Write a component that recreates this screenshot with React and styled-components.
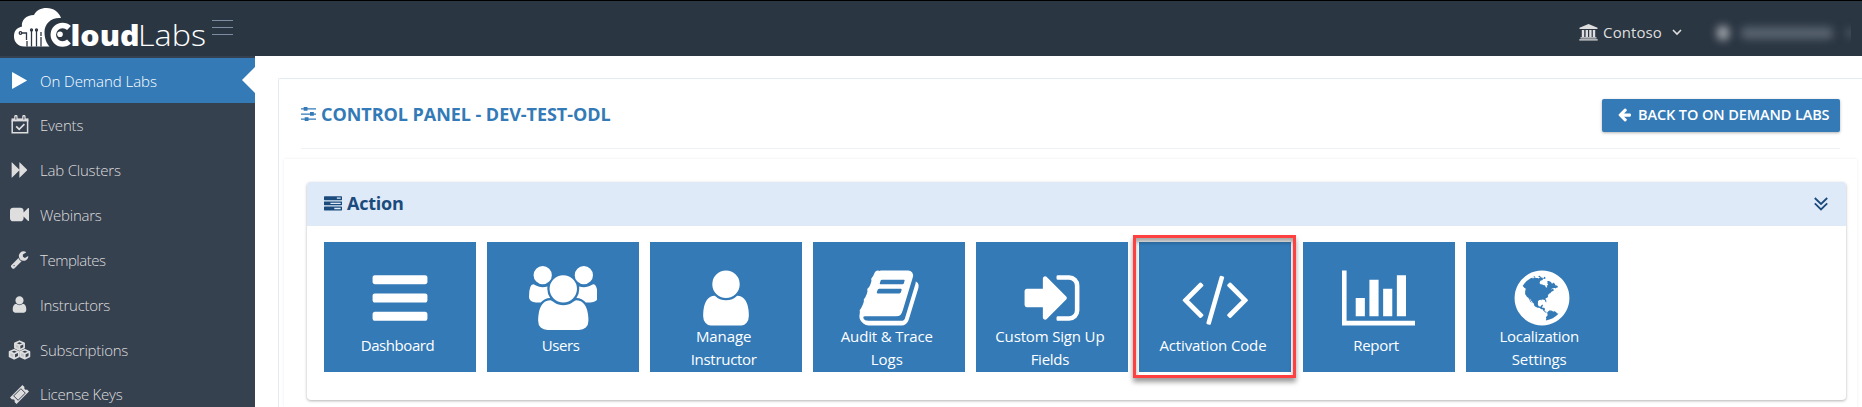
import React from 'react';
import styled, { createGlobalStyle } from 'styled-components';

const GlobalStyle = createGlobalStyle`
  * { box-sizing: border-box; }
  body {
    margin: 0;
    background: #fff;
    overflow: hidden;
    font-family: "Open Sans", "Noto Sans", sans-serif;
  }
`;

const PATHS = {
  bars: [1792, 'M1664 1344v128q0 26-19 45t-45 19h-1408q-26 0-45-19t-19-45v-128q0-26 19-45t45-19h1408q26 0 45 19t19 45zm0-512v128q0 26-19 45t-45 19h-1408q-26 0-45-19t-19-45v-128q0-26 19-45t45-19h1408q26 0 45 19t19 45zm0-512v128q0 26-19 45t-45 19h-1408q-26 0-45-19t-19-45v-128q0-26 19-45t45-19h1408q26 0 45 19t19 45z'],
  user: [1792, 'M1536 1399q0 109-62.5 187t-150.5 78h-854q-88 0-150.5-78t-62.5-187q0-85 8.5-160.5t31.5-152 58.5-131 94-89 134.5-34.5q131 128 313 128t313-128q76 0 134.5 34.5t94 89 58.5 131 31.5 152 8.5 160.5zm-256-887q0 159-112.5 271.5t-271.5 112.5-271.5-112.5-112.5-271.5 112.5-271.5 271.5-112.5 271.5 112.5 112.5 271.5z'],
  users: [1920, 'M593 896q-162 5-265 128h-134q-82 0-138-40.5t-56-118.5q0-353 124-353 6 0 43.5 21t97.5 42.5 119 21.5q67 0 133-23-5 37-5 66 0 139 81 256zm1071 637q0 120-73 189.5t-194 69.5h-874q-121 0-194-69.5t-73-189.5q0-53 3.5-103.5t14-109 26.5-108.5 43-97.5 62-81 85.5-53.5 111.5-20q10 0 43 21.5t73 48 107 48 135 21.5 135-21.5 107-48 73-48 43-21.5q61 0 111.5 20t85.5 53.5 62 81 43 97.5 26.5 108.5 14 109 3.5 103.5zm-1024-1277q0 106-75 181t-181 75-181-75-75-181 75-181 181-75 181 75 75 181zm704 384q0 159-112.5 271.5t-271.5 112.5-271.5-112.5-112.5-271.5 112.5-271.5 271.5-112.5 271.5 112.5 112.5 271.5zm576 225q0 78-56 118.5t-138 40.5h-134q-103-123-265-128 81-117 81-256 0-29-5-66 66 23 133 23 59 0 119-21.5t97.5-42.5 43.5-21q124 0 124 353zm-128-609q0 106-75 181t-181 75-181-75-75-181 75-181 181-75 181 75 75 181z'],
  code: [1920, 'M617 1399l-50 50q-10 10-23 10t-23-10l-466-466q-10-10-10-23t10-23l466-466q10-10 23-10t23 10l50 50q10 10 10 23t-10 23l-393 393 393 393q10 10 10 23t-10 23zm591-1067l-373 1291q-4 13-15.5 19.5t-23.5 2.5l-62-17q-13-4-19.5-15.5t-2.5-24.5l373-1291q4-13 15.5-19.5t23.5-2.5l62 17q13 4 19.5 15.5t2.5 24.5zm657 651l-466 466q-10 10-23 10t-23-10l-50-50q-10-10-10-23t10-23l393-393-393-393q-10-10-10-23t10-23l50-50q10-10 23-10t23 10l466 466q10 10 10 23t-10 23z'],
  chart: [2048, 'M640 896v512h-256v-512h256zm384-512v1024h-256v-1024h256zm1024 1152v128h-2048v-1536h128v1408h1920zm-640-896v768h-256v-768h256zm384-384v1152h-256v-1152h256z'],
  book: [1792, 'M1703 478q40 57 18 129l-275 906q-19 64-76.5 107.5t-122.5 43.5h-923q-77 0-148.5-53.5t-99.5-131.5q-24-67-2-127 0-4 3-27t4-37q1-8-3-21.5t-3-19.5q2-11 8-21t16.5-23.5 16.5-23.5q23-38 45-91.5t30-91.5q3-10 .5-30t-.5-28q3-11 17-28t17-23q21-36 42-92t25-90q1-9-2.5-32t.5-28q4-13 22-30.5t22-22.5q19-26 42.5-84.5t27.5-96.5q1-8-3-25.5t-2-26.5q2-8 9-18t18-23 17-21q8-12 16.5-30.5t15-35 16-36 19.5-32 26.5-23.5 36-11.5 47.5 5.5l-1 3q38-9 51-9h761q74 0 114 56t18 130l-274 906q-36 119-71.5 153.5t-128.5 34.5h-869q-27 0-38 15-11 16-1 43 24 70 144 70h923q29 0 56-15.5t35-41.5l300-987q7-22 5-57 38 15 59 43zm-1064 2q-4 13 2 22.5t20 9.5h608q13 0 25.5-9.5t16.5-22.5l21-64q4-13-2-22.5t-20-9.5h-608q-13 0-25.5 9.5t-16.5 22.5zm-83 256q-4 13 2 22.5t20 9.5h608q13 0 25.5-9.5t16.5-22.5l21-64q4-13-2-22.5t-20-9.5h-608q-13 0-25.5 9.5t-16.5 22.5z'],
  signIn: [1792, 'M1312 896q0 26-19 45l-544 544q-19 19-45 19t-45-19-19-45v-288h-448q-26 0-45-19t-19-45v-384q0-26 19-45t45-19h448v-288q0-26 19-45t45-19 45 19l544 544q19 19 19 45zm352-352v704q0 119-84.5 203.5t-203.5 84.5h-320q-13 0-22.5-9.5t-9.5-22.5q0-4-1-20t-.5-26.5 3-23.5 10-19.5 20.5-6.5h320q66 0 113-47t47-113v-704q0-66-47-113t-113-47h-312l-11.5-1-11.5-3-8-5.5-7-9-2-13.5q0-4-1-20t-.5-26.5 3-23.5 10-19.5 20.5-6.5h320q119 0 203.5 84.5t84.5 203.5z'],
  globe: [1792, 'M896 128q209 0 385.5 103t279.5 279.5 103 385.5-103 385.5-279.5 279.5-385.5 103-385.5-103-279.5-279.5-103-385.5 103-385.5 279.5-279.5 385.5-103zm274 521q-2 1-9.5 9.5t-13.5 9.5q2 0 4.5-5t5-11 3.5-7q6-7 22-15 14-6 52-12 34-8 51 11-2-2 9.5-13t14.5-12q3-2 15-4.5t15-7.5l2-22q-12 1-17.5-7t-6.5-21q0 2-6 8 0-7-4.5-8t-11.5 1-9 1q-10-3-15-7.5t-8-16.5-4-15q-2-5-9.5-10.5t-9.5-10.5q-1-2-2.5-5.5t-3-6.5-4-5.5-5.5-2.5-7 5-7.5 10-4.5 5q-3-2-6-1.5t-4.5 1-4.5 3-5 3.5q-3 2-8.5 3t-8.5 2q15-5-1-11-10-4-16-3 9-4 7.5-12t-8.5-14h5q-1-4-8.5-8.5t-17.5-8.5-13-6q-8-5-34-9.5t-33-.5q-5 6-4.5 10.5t4 14 3.5 12.5q1 6-5.5 13t-6.5 12q0 7 14 15.5t10 21.5q-3 8-16 16t-16 12q-5 8-1.5 18.5t10.5 16.5q2 2 1.5 4t-3.5 4.5-5.5 4-6.5 3.5l-3 2q-11 5-20.5-6t-13.5-26q-7-25-16-30-23-8-29 1-5-13-41-26-25-9-58-4 6-1 0-15-7-15-19-12 3-6 4-17.5t1-13.5q3-13 12-23 1-1 7-8.5t9.5-13.5.5-6q35 4 50-11 5-5 11.5-17t10.5-17q9-6 14-5.5t14.5 5.5 14.5 5q14 1 15.5-11t-7.5-20q12 1 3-17-4-7-8-9-12-4-27 5-8 4 2 8-1-1-9.5 10.5t-16.5 17.5-16-5q-1-1-5.5-13.5t-9.5-13.5q-8 0-16 15 3-8-11-15t-24-8q19-12-8-27-7-4-20.5-5t-19.5 4q-5 7-5.5 11.5t5 8 10.5 5.5 11.5 4 8.5 3q14 10 8 14-2 1-8.5 3.5t-11.5 4.5-6 4q-3 4 0 14t-2 14q-5-5-9-17.5t-7-16.5q7 9-25 6l-10-1q-4 0-16 2t-20.5 1-13.5-8q-4-8 0-20 1-4 4-2-4-3-11-9.5t-10-8.5q-46 15-94 41 6 1 12-1 5-2 13-6.5t10-5.5q34-14 42-7l5-5q14 16 20 25-7-4-30-1-20 6-22 12 7 12 5 18-4-3-11.5-10t-14.5-11-15-5q-16 0-22 1-146 80-235 222 7 7 12 8 4 1 5 9t2.5 11 11.5-3q9 8 3 19 1-1 44 27 19 17 21 21 3 11-10 18-1-2-9-9t-9-4q-3 5 .5 18.5t10.5 12.5q-7 0-9.5 16t-2.5 35.5-1 23.5l2 1q-3 12 5.5 34.5t21.5 19.5q-13 3 20 43 6 8 8 9 3 2 12 7.5t15 10 10 10.5q4 5 10 22.5t14 23.5q-2 6 9.5 20t10.5 23q-1 0-2.5 1t-2.5 1q3 7 15.5 14t15.5 13q1 3 2 10t3 11 8 2q2-20-24-62-15-25-17-29-3-5-5.5-15.5t-4.5-14.5q2 0 6 1.5t8.5 3.5 7.5 4 2 3q-3 7 2 17.5t12 18.5 17 19 12 13q6 6 14 19.5t0 13.5q9 0 20 10.5t17 19.5q5 8 8 26t5 24q2 7 8.5 13.5t12.5 9.5l16 8 13 7q5 2 18.5 10.5t21.5 11.5q10 4 16 4t14.5-2.5 13.5-3.5q15-2 29 15t21 21q36 19 55 11-2 1 .5 7.5t8 15.5 9 14.5 5.5 8.5q5 6 18 15t18 15q6-4 7-9-3 8 7 20t18 10q14-3 14-32-31 15-49-18 0-1-2.5-5.5t-4-8.5-2.5-8.5 0-7.5 5-3q9 0 10-3.5t-2-12.5-4-13q-1-8-11-20t-12-15q-5 9-16 8t-16-9q0 1-1.5 5.5t-1.5 6.5q-13 0-15-1 1-3 2.5-17.5t3.5-22.5q1-4 5.5-12t7.5-14.5 4-12.5-4.5-9.5-17.5-2.5q-19 1-26 20-1 3-3 10.5t-5 11.5-9 7q-7 3-24 2t-24-5q-13-8-22.5-29t-9.5-37q0-10 2.5-26.5t3-25-5.5-24.5q3-2 9-9.5t10-10.5q2-1 4.5-1.5t4.5 0 4-1.5 3-6q-1-1-4-3-3-3-4-3 7 3 28.5-1.5t27.5 1.5q15 11 22-2 0-1-2.5-9.5t-.5-13.5q5 27 29 9 3 3 15.5 5t17.5 5q3 2 7 5.5t5.5 4.5 5-.5 8.5-6.5q10 14 12 24 11 40 19 44 7 3 11 2t4.5-9.5 0-14-1.5-12.5l-1-8v-18l-1-8q-15-3-18.5-12t1.5-18.5 15-18.5q1-1 8-3.5t15.5-6.5 12.5-8q21-19 15-35 7 0 11-9-1 0-5-3t-7.5-5-4.5-2q9-5 2-16 5-3 7.5-11t7.5-10q9 12 21 2 7-8 1-16 5-7 20.5-10.5t18.5-9.5q7 2 8-2t1-12 3-12q4-5 15-9t13-5l17-11q3-4 0-4 18 2 31-11 10-11-6-20 3-6-3-9.5t-15-5.5q3-1 11.500-.5t10.500-1.500q15-10-7-16-17-5-43 12zm-163 877q206-36 351-189-3-3-12.500-4.500t-12.500-3.500q-18-7-24-8 1-7-2.500-13t-8-9-12.500-8-11-7q-2-2-7-6t-7-5.500-7.500-4.500-8.500-2-10 1l-3 1q-3 1-5.500 2.500t-5.500 3-4 3 0 2.500q-21-17-36-22-5-1-11-5.500t-10.500-7-10-1.500-11.500 7q-5 5-6 15t-2 13q-7-5 0-17.500t2-18.500q-3-6-10.500-4.500t-12 4.500-11.500 8.500-9 6.500-8.500 5.500-8.500 7.500q-3 4-6 12t-5 11q-2-4-11.500-6.500t-9.500-5.500q2 10 4 35t5 38q7 31-12 48-27 25-29 40-4 22 12 26 0 7-8 20.500t-7 21.500q0 6 2 16z'],
  play: [1792, 'M1576 927l-1328 738q-23 13-39.5 3t-16.5-36v-1472q0-26 16.5-36t39.5 3l1328 738q23 13 23 31t-23 31z'],
  forward: [1792, 'M109 1651q-19 19-32 13t-13-32v-1472q0-26 13-32t32 13l710 710q9 9 13 19v-710q0-26 13-32t32 13l710 710q19 19 19 45t-19 45l-710 710q-19 19-32 13t-13-32v-710q-4 10-13 19z'],
  video: [1792, 'M1792 352v1088q0 42-39 59-13 5-25 5-27 0-45-19l-403-403v166q0 119-84.5 203.5t-203.5 84.5h-704q-119 0-203.5-84.5t-84.5-203.5v-704q0-119 84.5-203.5t203.5-84.5h704q119 0 203.5 84.5t84.5 203.5v165l403-402q18-19 45-19 12 0 25 5 39 17 39 59z'],
  wrench: [1792, 'M448 1472q0-26-19-45t-45-19-45 19-19 45 19 45 45 19 45-19 19-45zm644-420l-682 682q-37 37-90 37-52 0-91-37l-106-108q-38-36-38-90 0-53 38-91l681-681q39 98 114.5 173.5t173.5 114.5zm634-435q0 39-23 106-47 134-164.5 217.5t-258.5 83.5q-185 0-316.5-131.5t-131.5-316.5 131.5-316.5 316.5-131.5q58 0 121.5 16.5t107.5 46.5q16 11 16 28t-16 28l-293 169v224l193 107q5-3 79-48.5t135.5-81 70.5-35.5q15 0 23.5 10t8.5 25z'],
  tasks: [1792, 'M1024 1408h640v-128h-640v128zm-384-512h1024v-128h-1024v128zm640-512h384v-128h-384v128zm512 832v256q0 26-19 45t-45 19h-1664q-26 0-45-19t-19-45v-256q0-26 19-45t45-19h1664q26 0 45 19t19 45zm0-512v256q0 26-19 45t-45 19h-1664q-26 0-45-19t-19-45v-256q0-26 19-45t45-19h1664q26 0 45 19t19 45zm0-512v256q0 26-19 45t-45 19h-1664q-26 0-45-19t-19-45v-256q0-26 19-45t45-19h1664q26 0 45 19t19 45z'],
  arrowLeft: [1792, 'M1664 896v128q0 53-32.5 90.5t-84.5 37.5h-704l293 294q38 36 38 90t-38 90l-75 76q-37 37-90 37-52 0-91-37l-651-652q-37-37-37-90 0-52 37-91l651-650q38-38 91-38 52 0 90 38l75 74q38 38 38 91t-38 91l-293 293h704q52 0 84.5 37.5t32.5 90.5z'],
};

function Glyph({ name, size }) {
  const [w, d] = PATHS[name];
  return (
    <svg width={(size * w) / 1792} height={size} viewBox={`0 0 ${w} 1792`} fill="currentColor" fillRule="evenodd" aria-hidden="true">
      <path d={d} />
    </svg>
  );
}

const CalendarIcon = () => (
  <svg width="18" height="20" viewBox="0 0 18 20" fill="none" stroke="currentColor">
    <path d="M1.2 5.5V17.8h15.4V5.500" strokeWidth="1.5" />
    <path d="M.5 3.4h17v3H.5z" fill="currentColor" stroke="none" />
    <path d="M4.9 1.6v3M12.9 1.6v3" strokeWidth="3.4" strokeLinecap="round" />
    <path d="M4.9 1.6v3M12.9 1.6v3" stroke="#364150" strokeWidth=".9" />
    <path d="M5.2 11.3l3 3 5.2-5.2" strokeWidth="1.7" />
  </svg>
);

const CubesIcon = () => (
  <svg width="23" height="20" viewBox="0 0 23 20" fill="none" stroke="currentColor" strokeWidth="1.7" strokeLinejoin="round">
    {[[11.5, 1.2], [6.2, 9.8], [16.8, 9.8]].map(([x, y]) => (
      <g key={x}>
        <path d={`M${x} ${y}l4.6 2v4.6l-4.6 2.3-4.6-2.3v-4.6z`} />
        <path d={`M${x - 4.6} ${y + 2}l4.6 2 4.6-2M${x} ${y + 4}v4.6`} />
        <path d={`M${x} ${y + 4}l-4.6-2v4.6l4.6 2.3z`} fill="currentColor" fillOpacity=".85" stroke="none" />
      </g>
    ))}
  </svg>
);

const TicketIcon = () => (
  <svg width="19" height="19" viewBox="0 0 19 19">
    <g transform="rotate(-45 9.5 9.5)">
      <path d="M.7 4.9h17.6v2.8a1.9 1.9 0 0 0 0 3.6v2.8H.7v-2.8a1.9 1.9 0 0 0 0-3.6z" fill="currentColor" />
      <rect x="4.4" y="6.4" width="10.2" height="6.2" fill="none" stroke="#364150" strokeWidth=".9" />
    </g>
  </svg>
);

const BankIcon = () => (
  <svg width="19" height="17" viewBox="0 0 19 17" fill="currentColor">
    <path d="M9.5 0L18.5 3.8V5H.5V3.8zM2.8 6h2.4v7H2.8zM6.6 6H9v7H6.6zM10.2 6h2.4v7h-2.4zM13.8 6h2.4v7h-2.4zM1.5 13.2h16v1.2h-16zM.3 15.2h18.4v1.4H.3z" />
  </svg>
);

const SlidersIcon = () => (
  <svg width="15" height="14" viewBox="0 0 15 14" fill="currentColor">
    <path d="M0 1.3h15v1.3H0zM0 6.4h15v1.3H0zM0 11.4h15v1.3H0zM2.7 0h3.8v3.7H2.7zM9 5h3.8v3.8H9zM3.7 10.2h3.8V14H3.7z" />
  </svg>
);

const Chevrons = ({ w, h, n, sw }) => (
  <svg width={w} height={h} viewBox={`0 0 ${w} ${h}`} fill="none" stroke="currentColor" strokeWidth={sw}>
    <path d={n === 2 ? 'M.8 1l6.2 6 6.2-6M.8 6.4l6.2 6 6.2-6' : 'M1 1l4 4 4-4'} />
  </svg>
);

const Header = styled.header`
  display: flex;
  align-items: flex-start;
  height: 56px;
  border-top: 1px solid #000;
  background: #2b3643;
  color: #dedede;
`;
const LogoBox = styled.a`
  margin-left: 13px;
  width: 193px;
  height: 55px;
`;
const Burger = styled.button`
  display: flex;
  flex-direction: column;
  gap: 6px;
  margin: 19px 0 0 6px;
  padding: 0;
  border: 0;
  background: none;
  span { width: 21px; height: 1px; background: #7c8ca3; }
`;
const Tenant = styled.div`
  display: flex;
  align-items: center;
  height: 32px;
  margin: 15px 0 0 auto;
  font-size: 15px;
`;
const TenantName = styled.span`
  margin: 0 10px 0 5px;
  letter-spacing: 0.1px;
`;
const Account = styled.div`
  display: flex;
  align-items: center;
  width: 145px;
  height: 40px;
  margin: 12px 11px 0 24px;
  padding-left: 11px;
  overflow: hidden;
`;
const Smudge = styled.i`
  flex: none;
  width: ${(p) => p.$w}px;
  height: ${(p) => p.$h}px;
  margin-right: ${(p) => p.$gap}px;
  border-radius: 5px;
  background: ${(p) => p.$c};
  filter: blur(4px);
`;

function Logo() {
  return (
    <svg width="193" height="55" viewBox="13 1 193 55">
      <path
        d="M24 46.500c-6 0-10-4.500-10-10 0-5 2-8.300 8-10-1-6 4-11.500 12-11.500 2-4.500 7-7 12.500-7 7 0 12.500 4 14.500 10-9-1-16.500 5-16.500 14 0 6 2 11.500 5 14.500z"
        fill="#fff"
      />
      <g fill="none" stroke="#2b3643" strokeWidth="1.300">
        <path d="M21 33h5.500v7M31.500 30v16.500M36.500 30v16.500M41 36v-4M27 41v5.500M41 37v9.500" />
        <circle cx="20.500" cy="33" r="1.300" />
        <circle cx="31.500" cy="30" r="1" />
        <circle cx="36.500" cy="30" r="1" />
      </g>
      <path d="M69 28A9.300 9.300 0 1 0 69 41.500" fill="none" stroke="#fff" strokeWidth="5.500" />
      <circle cx="60" cy="34.300" r="2.800" fill="#fff" />
      <text x="70.500" y="45.500" textLength="69" lengthAdjust="spacingAndGlyphs" fontFamily="Open Sans" fontWeight="800" fontSize="28" fill="#fff">loud</text>
      <text x="138" y="45.500" textLength="68" lengthAdjust="spacingAndGlyphs" fontFamily="Open Sans" fontWeight="300" fontSize="28.500" fill="#fff">Labs</text>
    </svg>
  );
}

const Body = styled.div`
  display: flex;
  height: 351px;
  overflow: hidden;
`;
const Sidebar = styled.nav`
  flex: none;
  width: 255px;
  padding-top: 2px;
  background: #364150;
  overflow: hidden;
`;
const NavItem = styled.a`
  position: relative;
  display: flex;
  align-items: center;
  height: 45px;
  padding-bottom: ${(p) => (p.$active ? 0 : 2)}px;
  background: ${(p) => (p.$active ? '#337ab7' : 'transparent')};
  color: ${(p) => (p.$active ? '#fff' : '#dedede')};
  font-size: 15px;
  font-weight: 300;
  &:last-child {
    height: 34px;
    padding: 0;
    align-items: flex-start;
    line-height: 43px;
    svg { margin-top: 12px; }
  }
  &::after {
    content: ${(p) => (p.$active ? '""' : 'none')};
    position: absolute;
    right: 0;
    top: 9px;
    border: 13px solid transparent;
    border-left: 0;
    border-right-color: #fff;
  }
`;
const NavIcon = styled.span`
  display: flex;
  justify-content: center;
  width: 23px;
  margin: 0 9px 0 8px;
`;
const NavText = styled.span`
  letter-spacing: ${(p) => p.$track}px;
`;

const Main = styled.main`
  flex: 1;
  min-width: 0;
  padding: 22px 0 0 23px;
  background: #fff;
`;
const Card = styled.section`
  height: 329px;
  border: 1px solid #e3ebf2;
  border-width: 1px 0 0 1px;
  border-radius: 2px 0 0 0;
`;
const CardHead = styled.div`
  display: flex;
  align-items: flex-start;
  justify-content: space-between;
  height: 70px;
  margin: 0 22px;
  padding-top: 20px;
  border-bottom: 1px solid #eef1f5;
`;
const Title = styled.h1`
  display: flex;
  align-items: center;
  gap: 5px;
  margin: 3px 0 0;
  height: 24px;
  color: #337ab7;
  font-size: 18px;
  font-weight: 700;
  letter-spacing: -0.05px;
`;
const BackButton = styled.button`
  display: flex;
  align-items: center;
  gap: 6px;
  width: 238px;
  height: 33px;
  padding: 0 0 2px 15px;
  border: 0;
  border-radius: 2px;
  background: #337ab7;
  box-shadow: 0 1px 3px rgba(0, 0, 0, 0.3);
  color: #fff;
  font: 600 14.5px "Open Sans", sans-serif;
  white-space: nowrap;
  letter-spacing: -0.1px;
`;
const CardBody = styled.div`
  height: 248px;
  margin: 10px 5px 0 5px;
  padding: 23px 11px 0 23px;
  box-shadow: 0 0 3px rgba(0, 0, 0, 0.08);
`;
const Panel = styled.section`
  height: 218px;
  border-radius: 4px;
  background: #fff;
  box-shadow: 0 1px 3px rgba(0, 0, 0, 0.3);
`;
const PanelHead = styled.div`
  display: flex;
  align-items: center;
  height: 44px;
  padding: 0 18px 0 17px;
  border-radius: 4px 4px 0 0;
  background: #deeaf8;
  color: #1b4b7c;
  svg:last-child { margin-left: auto; }
`;
const PanelTitle = styled.h2`
  margin: 0 0 2px 5px;
  font-size: 18px;
  font-weight: 700;
  letter-spacing: -0.25px;
`;
const Tiles = styled.div`
  display: flex;
  gap: 11.1px;
  padding: 16px 17px 0;
`;
const Tile = styled.a`
  position: relative;
  display: flex;
  flex-direction: column;
  align-items: center;
  flex: none;
  width: 152px;
  height: 130px;
  padding-top: 24px;
  background: #337ab7;
  color: #fff;
`;
const Label = styled.span`
  display: flex;
  flex-direction: column;
  align-items: center;
  margin-top: ${(p) => (p.$lines > 1 ? -5 : 4)}px;
  padding-right: 5px;
  font-size: 15px;
  line-height: 23px;
  white-space: nowrap;
`;
const LabelLine = styled.span`
  letter-spacing: ${(p) => p.$track}px;
`;
const Highlight = styled.i`
  position: absolute;
  left: -6px;
  top: -7px;
  width: 163px;
  height: 143px;
  border: 3px solid #ff4040;
  box-shadow: 0 4px 5px rgba(0, 0, 0, 0.4), inset 0 4px 4px rgba(0, 0, 0, 0.35);
`;

const NAV = [
  ['On Demand Labs', -0.04, <Glyph name="play" size={19} />],
  ['Events', -0.17, <CalendarIcon />],
  ['Lab Clusters', -0.2, <Glyph name="forward" size={18} />],
  ['Webinars', -0.26, <Glyph name="video" size={19} />],
  ['Templates', -0.49, <Glyph name="wrench" size={19} />],
  ['Instructors', -0.28, <Glyph name="user" size={19} />],
  ['Subscriptions', -0.25, <CubesIcon />],
  ['License Keys', -0.23, <TicketIcon />],
];

const TILES = [
  ['bars', [['Dashboard', -0.43]]],
  ['users', [['Users', -0.45]]],
  ['user', [['Manage', -0.07], ['Instructor', -0.29]]],
  ['book', [['Audit & Trace', -0.16], ['Logs', 0]]],
  ['signIn', [['Custom Sign Up', -0.16], ['Fields', -0.27]]],
  ['code', [['Activation Code', -0.13]], true],
  ['chart', [['Report', -0.3]]],
  ['globe', [['Localization', -0.27], ['Settings', -0.07]]],
];

export default function App() {
  return (
    <>
      <GlobalStyle />
      <Header>
        <LogoBox><Logo /></LogoBox>
        <Burger><span /><span /><span /></Burger>
        <Tenant>
          <BankIcon />
          <TenantName>Contoso</TenantName>
          <Chevrons w={10} h={7} n={1} sw={1.6} />
        </Tenant>
        <Account>
          <Smudge $w={12} $h={14} $gap={12} $c="#a4a8ad" />
          <Smudge $w={92} $h={12} $gap={12} $c="#596470" />
          <Smudge $w={14} $h={8} $gap={0} $c="#4a5561" />
        </Account>
      </Header>
      <Body>
        <Sidebar>
          {NAV.map(([text, track, icon], i) => (
            <NavItem key={text} $active={i === 0}>
              <NavIcon>{icon}</NavIcon>
              <NavText $track={track}>{text}</NavText>
            </NavItem>
          ))}
        </Sidebar>
        <Main>
          <Card>
            <CardHead>
              <Title><SlidersIcon />CONTROL PANEL - DEV-TEST-ODL</Title>
              <BackButton><Glyph name="arrowLeft" size={15} />BACK TO ON DEMAND LABS</BackButton>
            </CardHead>
            <CardBody>
              <Panel>
                <PanelHead>
                  <Glyph name="tasks" size={18} />
                  <PanelTitle>Action</PanelTitle>
                  <Chevrons w={14} h={14} n={2} sw={1.8} />
                </PanelHead>
                <Tiles>
                  {TILES.map(([icon, lines, marked]) => (
                    <Tile key={icon}>
                      <Glyph name={icon} size={64} />
                      <Label $lines={lines.length}>
                        {lines.map(([t, track]) => <LabelLine key={t} $track={track}>{t}</LabelLine>)}
                      </Label>
                      {marked && <Highlight />}
                    </Tile>
                  ))}
                </Tiles>
              </Panel>
            </CardBody>
          </Card>
        </Main>
      </Body>
    </>
  );
}
